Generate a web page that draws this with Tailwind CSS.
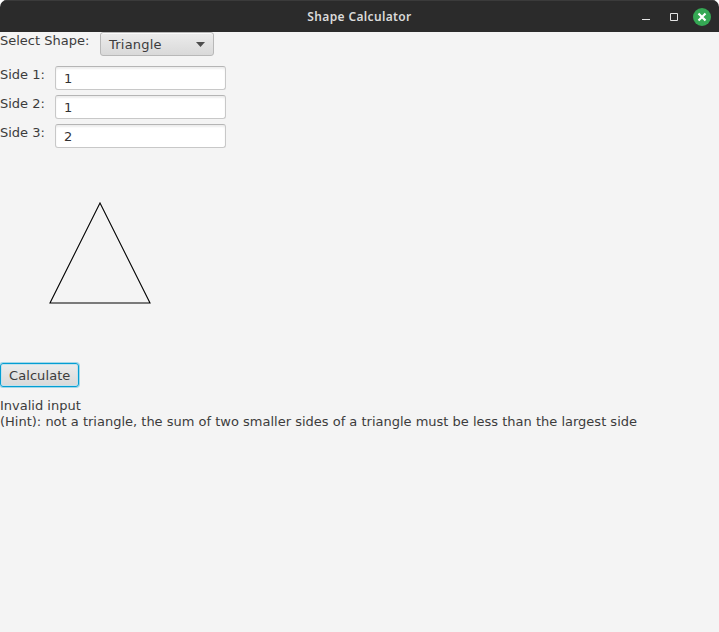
<!DOCTYPE html>
<html lang="en">
<head>
<meta charset="utf-8">
<title>Shape Calculator</title>
<script src="https://cdn.jsdelivr.net/npm/@tailwindcss/browser@4"></script>
</head>
<body class="bg-white">
<div class="flex h-[632px] w-[719px] flex-col overflow-hidden rounded-t-[7px] bg-[#f4f4f4] font-['DejaVu_Sans',sans-serif] text-[13px] leading-4 text-[#3c3c3c]">
  <header class="grid h-8 shrink-0 grid-cols-[1fr_auto_1fr] items-center border-t border-[#3b3b3b] bg-[#2b2b2b]">
    <span></span>
    <h1 class="font-['Noto_Sans',sans-serif] text-[12px] font-semibold tracking-[0.36px] text-[#dadada]">Shape Calculator</h1>
    <div class="flex justify-end pr-2">
      <svg class="block" width="71" height="18" viewBox="0 0 71 18" fill="none">
        <path d="M2 11.5h8" stroke="#e4e4e4"/>
        <path d="M30.5 5.5h7v7h-7z" stroke="#e4e4e4"/>
        <circle cx="62" cy="9" r="9" fill="#35a854"/>
        <path d="M58.5 5.5l7 7m0-7l-7 7" stroke="#fff" stroke-width="2.2"/>
      </svg>
    </div>
  </header>
  <main class="flex flex-col items-start">
    <div class="flex items-start">
      <label class="w-[100px] pt-px">Select Shape:</label>
      <button class="flex h-6 w-[114px] items-center justify-between rounded-[3px] border border-[#b8b8b8] bg-linear-to-b from-[#ececec] to-[#d9d9d9] px-2 shadow-[inset_0_1px_0_#fafafa]">
        <span class="pt-[2px] tracking-[0.22px]">Triangle</span>
        <svg width="9" height="5" viewBox="0 0 9 5"><path d="M0 0h9L4.5 5z" fill="#4d4d4d"/></svg>
      </button>
    </div>
    <form class="mt-[10px] flex flex-col gap-[5px]">
      <div class="flex items-start"><label class="w-[55px] pt-px">Side 1:</label><input value="1" class="h-6 w-[171px] rounded-[3px] border border-[#c8c8c8] border-t-[#b5b5b5] bg-white px-2 text-[#323232] shadow-[inset_0_2px_2px_#eeeeee]"></div>
      <div class="flex items-start"><label class="w-[55px] pt-px">Side 2:</label><input value="1" class="h-6 w-[171px] rounded-[3px] border border-[#c8c8c8] border-t-[#b5b5b5] bg-white px-2 text-[#323232] shadow-[inset_0_2px_2px_#eeeeee]"></div>
      <div class="flex items-start"><label class="w-[55px] pt-px">Side 3:</label><input value="2" class="h-6 w-[171px] rounded-[3px] border border-[#c8c8c8] border-t-[#b5b5b5] bg-white px-2 text-[#323232] shadow-[inset_0_2px_2px_#eeeeee]"></div>
    </form>
    <svg class="mt-[5px] block" width="200" height="200" viewBox="0 0 200 200"><path d="M100 50L50 150h100z" fill="none" stroke="#000" stroke-width="1.1"/></svg>
    <button class="mt-[10px] flex h-[24px] w-[79px] items-center rounded-[3px] border border-[#039ed3] bg-linear-to-b from-[#ececec] to-[#d9d9d9] pt-[2px] pl-[8px] tracking-[0.08px] shadow-[0_0_0_1px_#039ed355,inset_0_0_0_1px_#c3e1ec]">Calculate</button>
    <p class="mt-[11px] whitespace-pre">Invalid input
(Hint): not a triangle, the sum of two smaller sides of a triangle must be less than the largest side</p>
  </main>
</div>
</body>
</html>
